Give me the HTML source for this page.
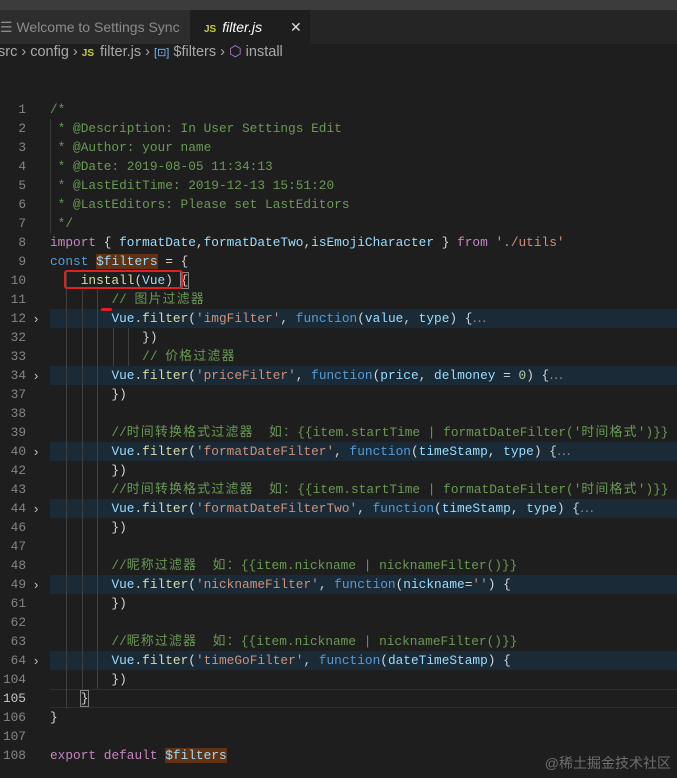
<!DOCTYPE html>
<html><head><meta charset="utf-8">
<style>
*{margin:0;padding:0;box-sizing:border-box}
body{width:677px;height:777px;background:#1e1e1e;overflow:hidden;position:relative;font-family:"Liberation Mono","Noto Sans CJK SC",monospace;}
.title{position:absolute;left:0;top:0;width:677px;height:10px;background:#3c3c3c}
.tabs{position:absolute;left:0;top:10px;width:677px;height:34px;background:#252526}
.tab1{position:absolute;left:0;top:0;width:190px;height:34px;background:#2d2d2d;color:#8b8b8b;font:14px "Liberation Sans",sans-serif;line-height:34px;padding-left:0;white-space:nowrap;overflow:hidden}
.tab2{position:absolute;left:190px;top:0;width:120px;height:34px;background:#1e1e1e;color:#fff;font:italic 14px "Liberation Sans",sans-serif;line-height:34px;padding-left:14px}
.js{color:#cbcb41;font:bold 10px "Liberation Sans",sans-serif;font-style:normal;margin-right:6px}
.crumb{position:absolute;top:44px;height:24px;line-height:24px;color:#a9a9a9;font:14.5px "Liberation Sans",sans-serif;white-space:nowrap;left:-2px}
.ln{position:absolute;left:0;width:26px;text-align:right;color:#858585;font-size:12.8px;line-height:19px;height:19px}
.code{position:absolute;left:50px;white-space:pre;font-size:12.8px;line-height:19px;height:19px;color:#d4d4d4}
.hl{position:absolute;left:50px;width:627px;height:19px;background:#1b2a37}
.arr{position:absolute;left:34px;color:#c5c5c5;font:13px "Liberation Sans",sans-serif;line-height:19px}
.g{position:absolute;width:1px;background:#404040}
.c{color:#6a9955}.k{color:#569cd6}.m{color:#c586c0}.s{color:#ce9178}.f{color:#dcdcaa}.v{color:#9cdcfe}.n{color:#b5cea8}.d{color:#8b8b8b}
.sel{background:#613214}
.cj{letter-spacing:1.3px}
#w{position:absolute;left:0;top:1px;width:677px;height:777px}
</style></head><body>
<div class="title"></div>
<div class="tabs">
<div class="tab1">☰ Welcome to Settings Sync</div>
<div class="tab2"><span class="js">JS</span>filter.js<span style="position:absolute;left:100px;font-style:normal;color:#ddd">✕</span></div>
</div>
<div class="crumb">src › config › <span class="js">JS</span>filter.js › <span style="color:#75beff;font-size:11px">[⊡]</span> $filters › <span style="color:#b180d7">⬡</span> install</div>
<div id="w">
<div class="hl" style="top:308px"></div>
<div class="hl" style="top:365px"></div>
<div class="hl" style="top:441px"></div>
<div class="hl" style="top:498px"></div>
<div class="hl" style="top:574px"></div>
<div class="hl" style="top:650px"></div>
<div style="position:absolute;left:50px;top:688px;width:627px;height:19px;border-top:1px solid #2f2f2f;border-bottom:1px solid #2f2f2f"></div>

<div class="g" style="left:50px;top:118px;height:114px;background:#3a3a3a"></div>
<div class="g" style="left:66px;top:270px;height:437px"></div>
<div class="g" style="left:82px;top:289px;height:399px"></div>
<div class="g" style="left:97px;top:289px;height:399px"></div>
<div class="g" style="left:113px;top:327px;height:38px"></div>
<div class="g" style="left:128px;top:327px;height:38px"></div>

<div class="arr" style="top:308px">›</div><div class="arr" style="top:365px">›</div><div class="arr" style="top:441px">›</div><div class="arr" style="top:498px">›</div><div class="arr" style="top:574px">›</div><div class="arr" style="top:650px">›</div>

<div class="ln" style="top:99px">1</div><div class="code c" style="top:99px">/*</div>
<div class="ln" style="top:118px">2</div><div class="code c" style="top:118px"> * @Description: In User Settings Edit</div>
<div class="ln" style="top:137px">3</div><div class="code c" style="top:137px"> * @Author: your name</div>
<div class="ln" style="top:156px">4</div><div class="code c" style="top:156px"> * @Date: 2019-08-05 11:34:13</div>
<div class="ln" style="top:175px">5</div><div class="code c" style="top:175px"> * @LastEditTime: 2019-12-13 15:51:20</div>
<div class="ln" style="top:194px">6</div><div class="code c" style="top:194px"> * @LastEditors: Please set LastEditors</div>
<div class="ln" style="top:213px">7</div><div class="code c" style="top:213px"> */</div>
<div class="ln" style="top:232px">8</div><div class="code" style="top:232px"><span class="m">import</span> { <span class="v">formatDate</span>,<span class="v">formatDateTwo</span>,<span class="v">isEmojiCharacter</span> } <span class="m">from</span> <span class="s">'./utils'</span></div>
<div class="ln" style="top:251px">9</div><div class="code" style="top:251px"><span class="k">const</span> <span class="v sel">$filters</span> = {</div>
<div class="ln" style="top:270px">10</div><div class="code" style="top:270px">    <span class="f">install</span>(<span class="v">Vue</span>) <span style="outline:1px solid #888">{</span></div>
<div class="ln" style="top:289px">11</div><div class="code" style="top:289px">        <span class="c">// <span class="cj">图片过滤器</span></span></div>
<div class="ln" style="top:308px">12</div><div class="code" style="top:308px">        <span class="v">Vue</span>.<span class="f">filter</span>(<span class="s">'imgFilter'</span>, <span class="k">function</span>(<span class="v">value</span>, <span class="v">type</span>) {<span class="d">⋯</span></div>
<div class="ln" style="top:327px">32</div><div class="code" style="top:327px">            })</div>
<div class="ln" style="top:346px">33</div><div class="code" style="top:346px">            <span class="c">// <span class="cj">价格过滤器</span></span></div>
<div class="ln" style="top:365px">34</div><div class="code" style="top:365px">        <span class="v">Vue</span>.<span class="f">filter</span>(<span class="s">'priceFilter'</span>, <span class="k">function</span>(<span class="v">price</span>, <span class="v">delmoney</span> = <span class="n">0</span>) {<span class="d">⋯</span></div>
<div class="ln" style="top:384px">37</div><div class="code" style="top:384px">        })</div>
<div class="ln" style="top:403px">38</div>
<div class="ln" style="top:422px">39</div><div class="code c" style="top:422px">        //<span class="cj">时间转换格式过滤器</span>  <span class="cj">如：</span>{{item.startTime | formatDateFilter('<span class="cj">时间格式</span>')}}</div>
<div class="ln" style="top:441px">40</div><div class="code" style="top:441px">        <span class="v">Vue</span>.<span class="f">filter</span>(<span class="s">'formatDateFilter'</span>, <span class="k">function</span>(<span class="v">timeStamp</span>, <span class="v">type</span>) {<span class="d">⋯</span></div>
<div class="ln" style="top:460px">42</div><div class="code" style="top:460px">        })</div>
<div class="ln" style="top:479px">43</div><div class="code c" style="top:479px">        //<span class="cj">时间转换格式过滤器</span>  <span class="cj">如：</span>{{item.startTime | formatDateFilter('<span class="cj">时间格式</span>')}}</div>
<div class="ln" style="top:498px">44</div><div class="code" style="top:498px">        <span class="v">Vue</span>.<span class="f">filter</span>(<span class="s">'formatDateFilterTwo'</span>, <span class="k">function</span>(<span class="v">timeStamp</span>, <span class="v">type</span>) {<span class="d">⋯</span></div>
<div class="ln" style="top:517px">46</div><div class="code" style="top:517px">        })</div>
<div class="ln" style="top:536px">47</div>
<div class="ln" style="top:555px">48</div><div class="code c" style="top:555px">        //<span class="cj">昵称过滤器</span>  <span class="cj">如：</span>{{item.nickname | nicknameFilter()}}</div>
<div class="ln" style="top:574px">49</div><div class="code" style="top:574px">        <span class="v">Vue</span>.<span class="f">filter</span>(<span class="s">'nicknameFilter'</span>, <span class="k">function</span>(<span class="v">nickname</span>=<span class="s">''</span>) {</div>
<div class="ln" style="top:593px">61</div><div class="code" style="top:593px">        })</div>
<div class="ln" style="top:612px">62</div>
<div class="ln" style="top:631px">63</div><div class="code c" style="top:631px">        //<span class="cj">昵称过滤器</span>  <span class="cj">如：</span>{{item.nickname | nicknameFilter()}}</div>
<div class="ln" style="top:650px">64</div><div class="code" style="top:650px">        <span class="v">Vue</span>.<span class="f">filter</span>(<span class="s">'timeGoFilter'</span>, <span class="k">function</span>(<span class="v">dateTimeStamp</span>) {</div>
<div class="ln" style="top:669px">104</div><div class="code" style="top:669px">        })</div>
<div class="ln" style="top:688px;color:#c6c6c6">105</div><div class="code" style="top:688px">    <span style="outline:1px solid #888">}</span></div>
<div class="ln" style="top:707px">106</div><div class="code" style="top:707px">}</div>
<div class="ln" style="top:726px">107</div>
<div class="ln" style="top:745px">108</div><div class="code" style="top:745px"><span class="m">export</span> <span class="m">default</span> <span class="v sel">$filters</span></div>

<div style="position:absolute;left:64px;top:269px;width:119px;height:19px;border:2px solid #e02020;border-radius:3px"></div>
<div style="position:absolute;left:101px;top:307px;width:11px;height:3px;background:#e02020;border-radius:2px"></div>
</div>
<div style="position:absolute;right:6px;top:753px;color:#6e6e6e;font:14px 'Liberation Sans','Noto Sans CJK SC',sans-serif">@稀土掘金技术社区</div>
</body></html>
